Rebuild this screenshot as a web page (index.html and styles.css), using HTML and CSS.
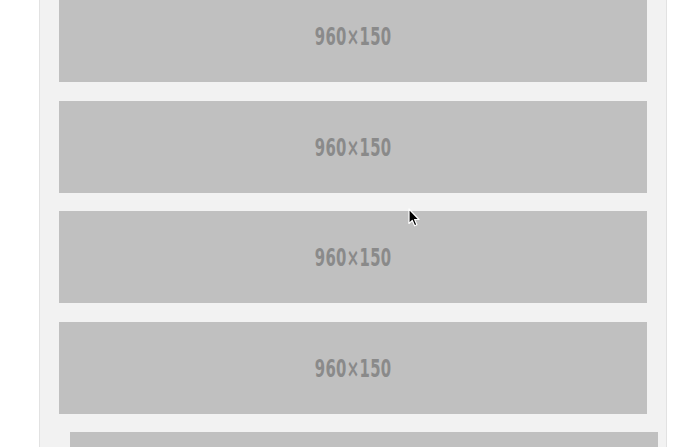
FILE: index.html
```html
<!DOCTYPE html>
<html>
<head>
<meta charset="utf-8">
<link rel="stylesheet" href="styles.css">
</head>
<body>
<div class="page">
  <div class="panel">
    <div class="list">
      <div class="ph"><span class="label">960×150</span></div>
      <div class="ph"><span class="label">960×150</span></div>
      <div class="ph"><span class="label">960×150</span></div>
      <div class="ph"><span class="label">960×150</span></div>
      <div class="ph ph-shift"></div>
    </div>
  </div>
  <svg class="cursor" width="13" height="20" viewBox="0 0 13 20">
    <path d="M1 1 L1 15.5 L4.3 12.4 L6.6 17.8 L8.9 16.8 L6.6 11.5 L11 11.5 Z" fill="#000" stroke="#fff" stroke-width="1.2" stroke-linejoin="round"/>
  </svg>
</div>
</body>
</html>
```

FILE: styles.css
```css
html, body {
  margin: 0;
  padding: 0;
  background: #ffffff;
  height: 100%;
  overflow: hidden;
}

.page {
  position: relative;
  height: 447px;
  overflow: hidden;
}

.panel {
  display: flex;
  flex-direction: column;
  margin-left: 39px;
  width: 588px;
  height: 100%;
  padding: 0 19px;
  background: #f2f2f2;
  border-left: 1px solid #e2e2e2;
  border-right: 1px solid #e2e2e2;
}

.list {
  display: flex;
  flex-direction: column;
  gap: 18.5px;
  margin-top: -9.6px;
}

.ph {
  width: 588px;
  height: 92px;
  flex: none;
  background: #c0c0c0;
  display: flex;
  align-items: center;
  justify-content: center;
}

.ph-shift {
  margin-left: 11px;
}

.label {
  display: inline-block;
  font-family: "DejaVu Sans Condensed", "DejaVu Sans", sans-serif;
  font-weight: bold;
  font-size: 25px;
  line-height: 1;
  color: #8a8a8a;
  transform: scaleX(0.66);
  letter-spacing: 0.5px;
  padding-top: 1px;
}

.cursor {
  position: absolute;
  left: 408px;
  top: 208px;
}
```
